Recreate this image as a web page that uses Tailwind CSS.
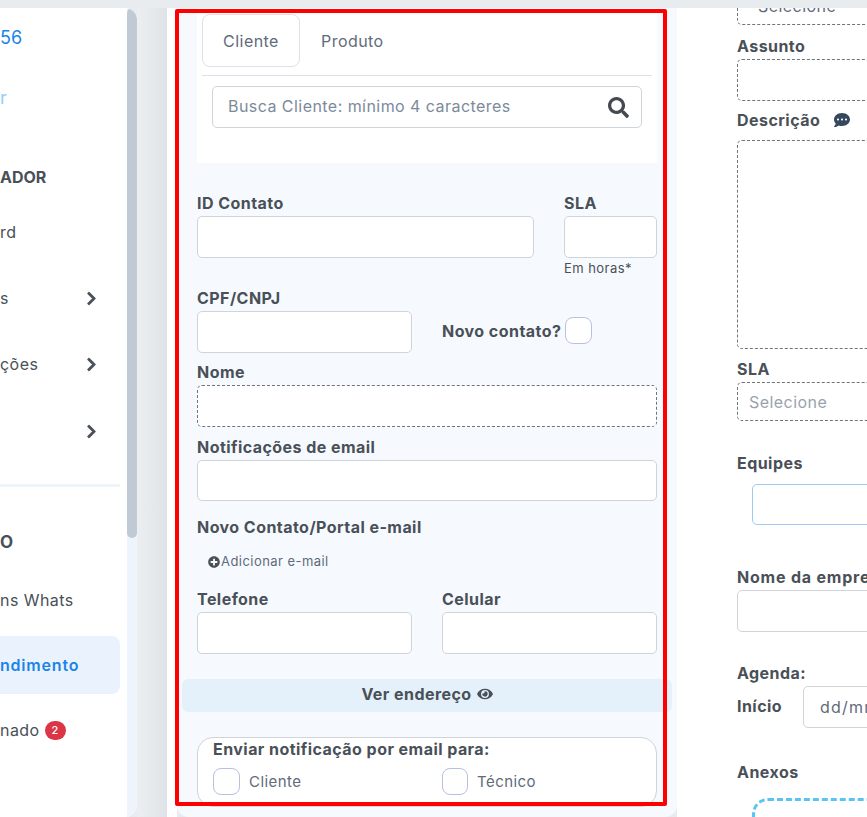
<!DOCTYPE html>
<html lang="pt-BR">
<head>
  <meta charset="UTF-8" />
  <title>Atendimento</title>
  <script src="https://cdn.jsdelivr.net/npm/@tailwindcss/browser@4"></script>
</head>
<body class="h-[817px] overflow-hidden bg-[#e9ecef] pt-2 [font-family:Inter,sans-serif] text-[16px] tracking-[0.45px] text-[#495057]">
  <div class="relative flex h-[809px] overflow-hidden">

    <!-- Sidebar -->
    <aside class="flex w-[137px] shrink-0 rounded-br-xl rounded-tr-xl bg-white overflow-hidden">
      <div class="w-[127px] shrink-0">
        <div class="flex h-[58px] items-center text-[18px] tracking-normal text-[#1b84e7]">56</div>
        <div class="flex h-[62px] items-center text-[18px] text-[#8fd0f5]">r</div>
        <div class="mt-[18px] flex h-[60px] items-center pt-0.5 text-[16px] font-bold tracking-normal">ADOR</div>
        <div class="flex h-[52px] items-center">rd</div>
        <div class="mt-[7px] flex h-[66px] w-[97px] items-center justify-between">
          <span>s</span>
          <svg class="h-[15px] w-[11px] fill-[#495057] stroke-[#495057] stroke-[24px]" viewBox="0 0 320 512"><path d="M285.476 272.971L91.132 467.314c-9.373 9.373-24.569 9.373-33.941 0l-22.667-22.667c-9.357-9.357-9.375-24.522-.04-33.901L188.505 256 34.484 101.255c-9.335-9.379-9.317-24.544.04-33.901l22.667-22.667c9.373-9.373 24.569-9.373 33.941 0L285.475 239.03c9.373 9.372 9.373 24.568.001 33.941z"/></svg>
        </div>
        <div class="flex h-[66px] w-[97px] items-center justify-between">
          <span>ções</span>
          <svg class="h-[15px] w-[11px] fill-[#495057] stroke-[#495057] stroke-[24px]" viewBox="0 0 320 512"><path d="M285.476 272.971L91.132 467.314c-9.373 9.373-24.569 9.373-33.941 0l-22.667-22.667c-9.357-9.357-9.375-24.522-.04-33.901L188.505 256 34.484 101.255c-9.335-9.379-9.317-24.544.04-33.901l22.667-22.667c9.373-9.373 24.569-9.373 33.941 0L285.475 239.03c9.373 9.372 9.373 24.568.001 33.941z"/></svg>
        </div>
        <div class="flex h-[67px] w-[97px] items-center justify-end pt-px">
          <svg class="h-[15px] w-[11px] fill-[#495057] stroke-[#495057] stroke-[24px]" viewBox="0 0 320 512"><path d="M285.476 272.971L91.132 467.314c-9.373 9.373-24.569 9.373-33.941 0l-22.667-22.667c-9.357-9.357-9.375-24.522-.04-33.901L188.505 256 34.484 101.255c-9.335-9.379-9.317-24.544.04-33.901l22.667-22.667c9.373-9.373 24.569-9.373 33.941 0L285.475 239.03c9.373 9.372 9.373 24.568.001 33.941z"/></svg>
        </div>
        <div class="mt-5 h-[3px] w-[120px] bg-[#edf4fc]"></div>
        <div class="mt-[26px] flex h-[60px] items-center text-[17px] font-bold">O</div>
        <div class="flex h-[54px] items-center pb-px">ns Whats</div>
        <div class="mt-[9px] flex h-[58px] w-[120px] items-center rounded-r-lg bg-[#eaf3fd] pb-px font-semibold tracking-[0.8px] text-[#1b84e7]">ndimento</div>
        <div class="mt-2 flex h-[56px] items-center gap-[5px]">
          <span>nado</span>
          <span class="flex h-[19px] w-[21px] items-center justify-center rounded-full bg-[#dc3545] text-[11px] font-medium text-white">2</span>
        </div>
      </div>
      <div class="w-2.5 shrink-0 bg-[#edf4fc]">
        <div class="h-[530px] rounded-[5px] bg-[#c0cad5]"></div>
      </div>
    </aside>

    <div class="w-[30px] shrink-0 bg-gradient-to-r from-[#eceef1] to-[#dfe3e7]"></div>
    <div class="w-2.5 shrink-0 bg-white"></div>

    <!-- Client form -->
    <main class="w-[500px] shrink-0 rounded-b-xl bg-[#f6faff] px-5">
      <section class="h-[155px] bg-white pt-1.5">
        <div class="mx-[5px] flex h-[62px] border-b border-[#dee2e6] items-start">
          <div class="flex h-[53px] w-[98px] items-center justify-center rounded-lg border border-[#dee2e6] text-[#5f6b7a]">Cliente</div>
          <div class="ml-[21px] flex h-[53px] items-center text-[#5f6b7a]">Produto</div>
        </div>
        <div class="mx-[15px] mt-2.5 flex h-[42px] items-center justify-between rounded-[5px] border border-[#ced4da] pl-[15px] pr-3">
          <span class="-translate-y-px text-[#7c8a9a]">Busca Cliente: mínimo 4 caracteres</span>
          <svg class="h-[21px] w-[21px] fill-[#444a50]" viewBox="0 0 512 512"><path d="M505 442.7L405.3 343c-4.5-4.5-10.6-7-17-7H372c27.6-35.3 44-79.7 44-128C416 93.1 322.9 0 208 0S0 93.1 0 208s93.1 208 208 208c48.3 0 92.7-16.4 128-44v16.3c0 6.4 2.5 12.5 7 17l99.7 99.7c9.4 9.4 24.6 9.4 33.9 0l28.3-28.3c9.4-9.4 9.4-24.6.1-34zM208 336c-70.7 0-128-57.2-128-128 0-70.7 57.2-128 128-128 70.7 0 128 57.2 128 128 0 70.7-57.2 128-128 128z"/></svg>
        </div>
      </section>

      <section class="pt-[29px]">
        <div class="flex gap-[30px]">
          <div class="w-[337px]">
            <div class="mb-0.5 h-[22px] font-bold leading-[22px]">ID Contato</div>
            <div class="h-[42px] rounded-[5px] border border-[#ced4da] bg-white"></div>
          </div>
          <div class="w-[93px]">
            <div class="mb-0.5 h-[22px] font-bold leading-[22px]">SLA</div>
            <div class="h-[42px] rounded-[5px] border border-[#ced4da] bg-white"></div>
            <div class="mt-[3px] h-[14px] whitespace-nowrap text-[13px] leading-[14px]">Em horas*</div>
          </div>
        </div>

        <div class="mt-3 flex gap-[30px]">
          <div class="w-[215px]">
            <div class="mb-0.5 h-[22px] font-bold leading-[22px]">CPF/CNPJ</div>
            <div class="h-[42px] rounded-[5px] border border-[#ced4da] bg-white"></div>
          </div>
          <div class="flex h-[27px] w-[215px] translate-y-[30px] items-center">
            <span class="mt-px w-[123px] shrink-0 whitespace-nowrap font-bold">Novo contato?</span>
            <span class="h-[27px] w-[27px] shrink-0 rounded-lg border border-[#b9c0e0] bg-white"></span>
          </div>
        </div>

        <div class="mb-0.5 mt-2 h-[22px] font-bold leading-[22px]">Nome</div>
        <div class="h-[42px] rounded-[5px] border border-dashed border-[#6c757d] bg-white"></div>

        <div class="mb-0.5 mt-[9px] h-[22px] font-bold leading-[22px]">Notificações de email</div>
        <div class="h-[41px] rounded-[5px] border border-[#ced4da] bg-white"></div>

        <div class="mt-[15px] h-[22px] font-bold leading-[22px]">Novo Contato/Portal e-mail</div>

        <div class="ml-[11px] mt-[13px] flex h-5 items-center pt-px text-[13px] text-[#5f6b7a]">
          <svg class="h-3 w-3 shrink-0 fill-[#495057]" viewBox="0 0 512 512"><path d="M256 8C119 8 8 119 8 256s111 248 248 248 248-111 248-248S393 8 256 8zm144 276c0 6.6-5.4 12-12 12h-92v92c0 6.6-5.4 12-12 12h-56c-6.6 0-12-5.4-12-12v-92h-92c-6.6 0-12-5.4-12-12v-56c0-6.6 5.4-12 12-12h92v-92c0-6.6 5.4-12 12-12h56c6.6 0 12 5.4 12 12v92h92c6.6 0 12 5.4 12 12v56z"/></svg>
          <span class="ml-px">Adicionar e-mail</span>
        </div>

        <div class="mt-[17px] flex gap-[30px]">
          <div class="w-[215px]">
            <div class="mb-0.5 h-[22px] font-bold leading-[22px]">Telefone</div>
            <div class="h-[42px] rounded-[5px] border border-[#ced4da] bg-white"></div>
          </div>
          <div class="w-[215px]">
            <div class="mb-0.5 h-[22px] font-bold leading-[22px]">Celular</div>
            <div class="h-[42px] rounded-[5px] border border-[#ced4da] bg-white"></div>
          </div>
        </div>

        <div class="-mx-[15px] mt-[25px] flex h-[33px] items-center justify-center gap-[5px] rounded-md bg-[#e4f0fa] pb-[3px] font-bold">
          Ver endereço
          <svg class="h-[14px] w-4 fill-[#495057]" viewBox="0 0 576 512"><path d="M572.52 241.4C518.29 135.59 410.93 64 288 64S57.68 135.64 3.48 241.41a32.35 32.35 0 0 0 0 29.19C57.71 376.41 165.07 448 288 448s230.32-71.64 284.52-177.41a32.35 32.35 0 0 0 0-29.19zM288 400a144 144 0 1 1 144-144 143.93 143.93 0 0 1-144 144zm0-240a95.31 95.31 0 0 0-25.31 3.79 47.85 47.85 0 0 1-66.9 66.9A95.78 95.78 0 1 0 288 160z"/></svg>
        </div>

        <div class="mt-[25px] h-[70px] rounded-2xl border border-[#ced4da] bg-white">
          <div class="ml-[15px] h-[22px] font-bold leading-[22px]">Enviar notificação por email para:</div>
          <div class="mt-2 flex">
            <div class="flex w-[244px] items-center gap-[9px] pl-[15px]">
              <span class="h-[27px] w-[27px] rounded-lg border border-[#b9c0e0]"></span>
              <span class="pt-px text-[15px] text-[#5f6b7a]">Cliente</span>
            </div>
            <div class="flex items-center gap-[9px]">
              <span class="h-[27px] w-[26px] rounded-lg border border-[#b9c0e0]"></span>
              <span class="pt-px text-[15px] text-[#5f6b7a]">Técnico</span>
            </div>
          </div>
        </div>
      </section>
    </main>

    <!-- Right column, runs past the window edge -->
    <div class="min-w-0 flex-1 overflow-hidden bg-white pl-[60px]">
      <div class="w-[300px]">
        <div class="-mt-[25px] flex h-[42px] items-center rounded-[5px] border border-dashed border-[#6c757d] pl-5 pt-1 text-[#5f6b7a]">Selecione</div>
        <div class="mb-0.5 mt-2.5 h-[22px] font-bold leading-[22px]">Assunto</div>
        <div class="h-[42px] rounded-[5px] border border-dashed border-[#6c757d]"></div>
        <div class="mb-[9px] mt-2 flex h-[22px] items-center gap-[14px] font-bold">
          Descrição
          <svg class="h-[16px] w-[16px] fill-[#34495e]" viewBox="0 0 512 512"><path d="M256 32C114.6 32 0 125.1 0 240c0 49.6 21.4 95 57 130.7C44.5 421.1 2.7 466 2.2 466.5c-2.2 2.3-2.8 5.7-1.5 8.7S4.8 480 8 480c66.3 0 116-31.8 140.6-51.4 32.7 12.3 69 19.4 107.4 19.4 141.4 0 256-93.1 256-208S397.4 32 256 32zM128 272c-17.7 0-32-14.3-32-32s14.3-32 32-32 32 14.3 32 32-14.3 32-32 32zm128 0c-17.7 0-32-14.3-32-32s14.3-32 32-32 32 14.3 32 32-14.3 32-32 32zm128 0c-17.7 0-32-14.3-32-32s14.3-32 32-32 32 14.3 32 32-14.3 32-32 32z"/></svg>
        </div>
        <div class="h-[209px] rounded-[5px] border border-dashed border-[#6c757d]"></div>
        <div class="mb-0.5 mt-[9px] h-[22px] font-bold leading-[22px]">SLA</div>
        <div class="flex h-[39px] items-center rounded-[5px] border border-dashed border-[#6c757d] pl-[11px] text-[#9aa3ad]">Selecione</div>
        <div class="mt-[31px] h-[22px] font-bold leading-[22px]">Equipes</div>
        <div class="ml-[15px] mt-2.5 h-[41px] rounded-[5px] border border-[#9ccbf3]"></div>
        <div class="mb-0.5 mt-[41px] h-[22px] whitespace-nowrap font-bold tracking-[0.8px] leading-[22px]">Nome da empresa</div>
        <div class="h-[42px] rounded-[5px] border border-[#ced4da]"></div>
        <div class="mt-[30px] h-[22px] font-bold leading-[22px]">Agenda:</div>
        <div class="mt-[2px] flex h-[42px] items-center">
          <span class="w-[66px] pb-0.5 font-bold">Início</span>
          <div class="flex h-[42px] flex-1 items-center rounded-[5px] border border-[#ced4da] pl-4 tracking-[1.2px] text-[#5f6b7a]">dd/mm/aaaa</div>
        </div>
        <div class="mt-[33px] h-[22px] font-bold leading-[22px]">Anexos</div>
        <div class="ml-[15px] mt-[15px] h-[60px] rounded-2xl border-[3px] border-dashed border-[#5cc4f5]"></div>
      </div>
    </div>

    <!-- Red highlight drawn over the screenshot -->
    <div class="pointer-events-none absolute left-[175px] top-px h-[797px] w-[492px] rounded-[2px] border-4 border-[#ff0000]"></div>
  </div>
</body>
</html>
